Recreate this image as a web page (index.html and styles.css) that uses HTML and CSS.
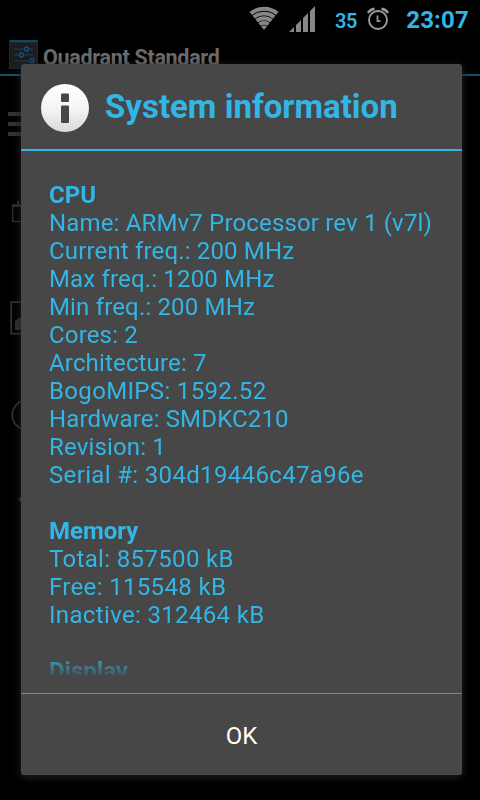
FILE: index.html
```
<!DOCTYPE html>
<html lang="en">
<head>
    <meta charset="UTF-8">
    <meta name="viewport" content="width=device-width, initial-scale=1.0">
    <title>Quadrant Standard</title>
    <link rel="stylesheet" href="styles.css">
</head>
<body>

<header class="status-bar">
    <svg class="wifi" width="30" height="24" viewBox="0 0 30 24">
        <clipPath id="fan"><path d="M15 24 L-1 4 V0 H31 V4 Z"/></clipPath>
        <g clip-path="url(#fan)" fill="none" stroke="#868686" stroke-width="3.9">
            <circle cx="15" cy="24" r="21.2"/>
            <circle cx="15" cy="24" r="16.4"/>
            <circle cx="15" cy="24" r="11.8"/>
            <circle cx="15" cy="24" r="7.3"/>
            <circle cx="15" cy="24" r="2.6"/>
        </g>
    </svg>
    <svg class="signal" width="26" height="26" viewBox="0 0 26 26" fill="#868686">
        <path d="M0 26 L5 21 V26 Z M7 19 L12 14 V26 H7 Z M14 12 L19 7 V26 H14 Z M21 5 L26 0 V26 H21 Z"/>
    </svg>
    <span class="battery">35</span>
    <svg class="alarm" width="22" height="24" viewBox="0 0 22 24" fill="none" stroke="#9b9b9b">
        <circle cx="11" cy="13" r="9" stroke-width="1.9"/>
        <path d="M1 6 Q3 2.5 7.5 1.8 M21 6 Q19 2.5 14.5 1.8" stroke-width="2.5"/>
        <path d="M10.5 8.5 V14.2 H13.5" stroke-width="1.7"/>
    </svg>
    <span class="clock">23:07</span>
</header>

<div class="action-bar">
    <svg width="29" height="29" viewBox="0 0 29 29">
        <rect width="29" height="29" rx="1" fill="#1b1d1f"/>
        <rect x=".5" y=".5" width="28" height="28" fill="none" stroke="#12293c"/>
        <path d="M1 1.2 H28" stroke="#184a62" stroke-width="2"/>
        <path d="M5 9 H24 M5 15 H24 M5 21 H24" stroke="#15425e" stroke-width="1.2"/>
        <g fill="#10222e" stroke="#1b4f70" stroke-width="1.4">
            <circle cx="17.5" cy="9" r="2"/>
            <circle cx="12.5" cy="15" r="2"/>
            <circle cx="23" cy="20.5" r="2"/>
        </g>
    </svg>
    <span>Quadrant Standard</span>
</div>

<div class="menu">
    <svg width="40" height="100" viewBox="0 0 40 100" fill="#323232">
        <path d="M8 36 H36 V40 H8 Z M8 46 H36 V50 H8 Z M8 56 H36 V60 H8 Z"/>
    </svg>
    <svg width="40" height="100" viewBox="0 0 40 100" fill="none" stroke="#323232">
        <path d="M12.7 29 V45.3 H34 V29" stroke-width="1.3"/>
        <path d="M12 29.6 H34" stroke-width="2.6"/>
        <path d="M18 25 V29" stroke-width="2"/>
    </svg>
    <svg width="40" height="100" viewBox="0 0 40 100">
        <path d="M11.2 26.2 H42 V57.6 H11.2 Z" fill="none" stroke="#323232" stroke-width="1.8"/>
        <path d="M15 54 V45 L21 41 L30 47 V54 Z" fill="#323232"/>
    </svg>
    <svg width="40" height="100" viewBox="0 0 40 100">
        <circle cx="27" cy="39" r="14.8" fill="none" stroke="#323232" stroke-width="1.8"/>
    </svg>
    <svg width="40" height="100" viewBox="0 0 40 100">
        <path d="M18 23 L21 21 L32 33 L28 35 Z" fill="#323232"/>
    </svg>
</div>

<div class="dialog">
    <div class="dialog-title">
        <svg width="48" height="48" viewBox="0 0 48 48">
            <defs>
                <linearGradient id="shade" x1="0" y1="0" x2="0" y2="1">
                    <stop offset="0" stop-color="#fff"/>
                    <stop offset=".5" stop-color="#f5f5f5"/>
                    <stop offset="1" stop-color="#d9d9d9"/>
                </linearGradient>
            </defs>
            <circle cx="24" cy="24" r="24" fill="url(#shade)"/>
            <rect x="20" y="9.5" width="8" height="8.5" rx="1" fill="#474747"/>
            <rect x="20" y="21.5" width="8" height="17.5" rx="1" fill="#474747"/>
        </svg>
        <h1>System information</h1>
    </div>

    <div class="dialog-body">
        <h2>CPU</h2>
        <p>Name: ARMv7 Processor rev 1 (v7l)</p>
        <p>Current freq.: 200 MHz</p>
        <p>Max freq.: 1200 MHz</p>
        <p>Min freq.: 200 MHz</p>
        <p>Cores: 2</p>
        <p>Architecture: 7</p>
        <p class="wide">BogoMIPS: 1592.52</p>
        <p>Hardware: SMDKC210</p>
        <p>Revision: 1</p>
        <p class="wide">Serial #: 304d19446c47a96e</p>

        <h2>Memory</h2>
        <p class="wide">Total: 857500 kB</p>
        <p class="wide">Free: 115548 kB</p>
        <p class="wide">Inactive: 312464 kB</p>

        <h2>Display</h2>
    </div>

    <button class="ok">OK</button>
</div>

</body>
</html>
```

FILE: styles.css
```
* {
    box-sizing: border-box;
}
body {
    font-family: Roboto, sans-serif;
    background-color: #000;
    margin: 0;
    height: 800px;
    overflow: hidden;
    position: relative;
}
.status-bar {
    display: flex;
    align-items: flex-start;
    height: 38px;
    padding: 6px 11px 0 249px;
    color: #33b5e5;
    font-weight: 700;
}
.signal {
    margin-left: 10px;
}
.battery {
    width: 23px;
    margin-left: 20px;
    padding-top: 3px;
    font-size: 20px;
    font-weight: 600;
    letter-spacing: -0.4px;
    line-height: 24px;
}
.alarm {
    margin: 1px 0 0 9px;
}
.clock {
    margin-left: auto;
    font-size: 24px;
    letter-spacing: 0.2px;
    line-height: 28px;
}
.action-bar {
    display: flex;
    height: 38px;
    padding: 2px 0 0 9px;
    border-bottom: 2px solid #174f66;
    color: #6b6b6b;
    font-size: 21.5px;
    font-weight: 700;
    letter-spacing: -0.3px;
    line-height: 35px;
}
.action-bar span {
    margin-left: 5px;
}
.menu {
    display: flex;
    flex-direction: column;
}
.dialog {
    position: absolute;
    top: 64px;
    left: 21px;
    width: 441px;
    height: 711px;
    display: flex;
    flex-direction: column;
    background-color: #474747;
    border-radius: 3px;
    box-shadow: 0 2px 9px #242424;
    color: #33b5e5;
}
.dialog-title {
    display: flex;
    align-items: center;
    height: 87px;
    padding-left: 20px;
    border-bottom: 2px solid #33b5e5;
}
.dialog-title svg {
    margin-top: 2px;
}
.dialog-title h1 {
    margin: 0 0 0 16px;
    font-size: 33px;
    font-weight: 700;
}
.dialog-body {
    height: 524px;
    padding: 30px 0 0 28px;
    overflow: hidden;
    font-size: 24px;
    line-height: 28px;
    letter-spacing: 0.16px;
    white-space: nowrap;
    -webkit-mask-image: linear-gradient(#000 502px, transparent 528px);
    mask-image: linear-gradient(#000 502px, transparent 528px);
}
.dialog-body h2 {
    margin: 28px 0 0;
    font-size: 24px;
    font-weight: 700;
    letter-spacing: 0;
}
.dialog-body h2:first-child {
    margin-top: 0;
}
.dialog-body p {
    margin: 0;
}
.dialog-body .wide {
    letter-spacing: 0.34px;
}
.ok {
    height: 82px;
    margin-top: auto;
    padding: 2px 0 0;
    border: none;
    border-top: 1px solid #848484;
    background: none;
    color: #fff;
    font-family: inherit;
    font-size: 24px;
}
```
